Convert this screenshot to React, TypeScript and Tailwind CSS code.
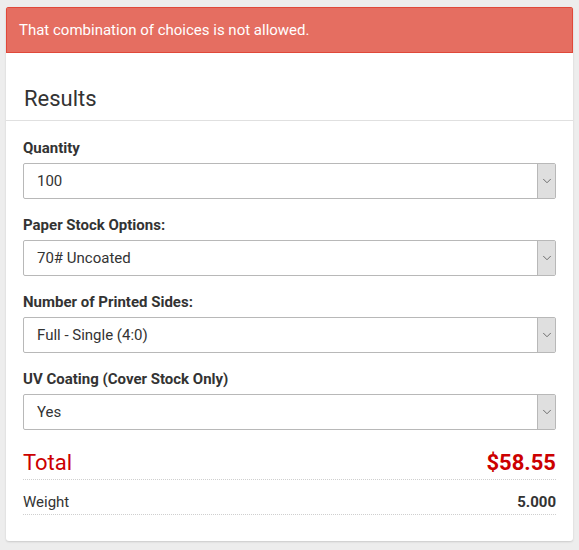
import { ChevronDown } from "lucide-react";

const fields = [
  { label: "Quantity", value: "100" },
  { label: "Paper Stock Options:", value: "70# Uncoated" },
  { label: "Number of Printed Sides:", value: "Full - Single (4:0)" },
  { label: "UV Coating (Cover Stock Only)", value: "Yes" },
];

function FakeSelect({ value }: { value: string }) {
  return (
    <div className="flex h-[36px] rounded-[2px] border border-[#b8b8b8] bg-white">
      <div className="flex flex-1 items-center pl-[13px] text-[15px] text-[#333]">{value}</div>
      <div className="flex w-[18px] items-center justify-center border-l border-[#b8b8b8] bg-[#dfdfdf]">
        <ChevronDown className="h-[14px] w-[14px] text-[#555]" strokeWidth={1.4} />
      </div>
    </div>
  );
}

export default function App() {
  return (
    <div className="min-h-[550px] bg-[#ededed] px-[6px] pt-[7px] font-['Roboto',sans-serif]">
      <div className="overflow-hidden rounded-[3px] bg-white shadow-[0_1px_2px_rgba(0,0,0,0.15)]">
        <div className="flex h-[46px] items-center border border-[#e0483a] bg-[#e56e61] pl-[12px] text-[15px] text-white">
          That combination of choices is not allowed.
        </div>
        <div className="px-[18px] pb-[7px] pt-[32px] text-[22px] leading-[28px] text-[#333]">Results</div>
        <div className="border-t border-[#e0e0e0]" />
        <div className="px-[17px] pt-[17px] pb-[26px]">
          {fields.map((f) => (
            <div key={f.label} className="mb-[16px]">
              <div className="mb-[5px] text-[15px] font-bold leading-[20px] text-[#333]">{f.label}</div>
              <FakeSelect value={f.value} />
            </div>
          ))}
          <div className="flex items-center justify-between border-b border-dotted border-[#cfcfcf] pt-[3px] pb-[2px] leading-[28px] text-[#cc0000]">
            <span className="text-[22px]">Total</span>
            <span className="text-[22px] font-bold">$58.55</span>
          </div>
          <div className="flex items-center justify-between border-b border-dotted border-[#cfcfcf] pt-[12px] pb-[2px] text-[15px] leading-[20px] text-[#333]">
            <span>Weight</span>
            <span className="font-bold">5.000</span>
          </div>
        </div>
      </div>
    </div>
  );
}
